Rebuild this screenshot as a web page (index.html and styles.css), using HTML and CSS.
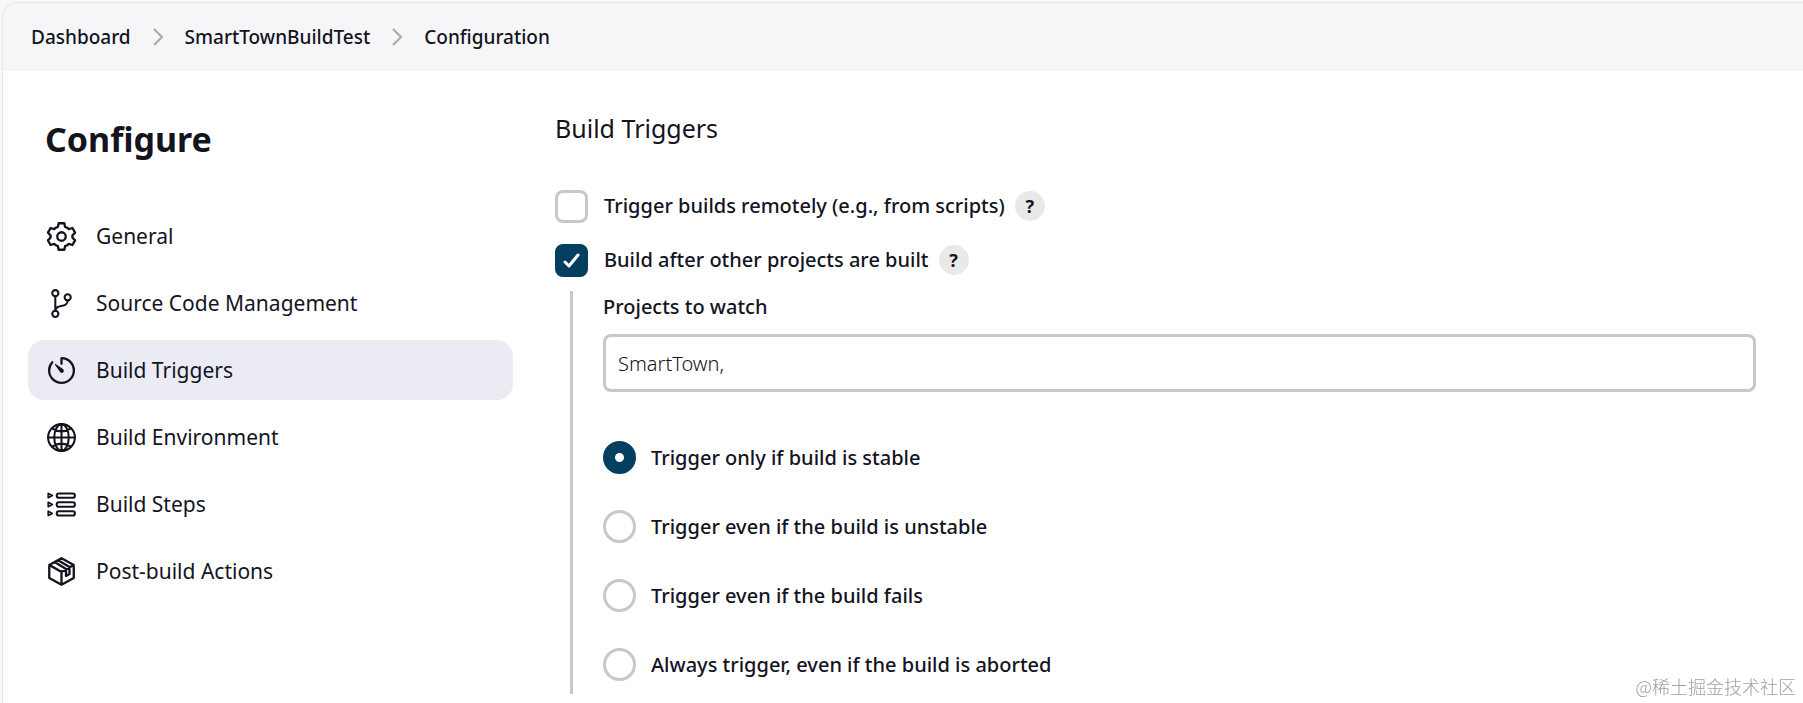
FILE: index.html
```html
<!DOCTYPE html>
<html lang="en">
<head>
  <meta charset="UTF-8">
  <meta name="viewport" content="width=device-width, initial-scale=1.0">
  <title>SmartTownBuildTest Config</title>
  <link rel="stylesheet" href="styles.css">
</head>
<body>
  <div class="page">
    <!-- Breadcrumbs -->
    <nav class="breadcrumbs" aria-label="Breadcrumbs">
      <a href="#">Dashboard</a>
      <svg class="chevron" viewBox="0 0 10 18"><path d="M1 1l8 8-8 8"/></svg>
      <a href="#">SmartTownBuildTest</a>
      <svg class="chevron" viewBox="0 0 10 18"><path d="M1 1l8 8-8 8"/></svg>
      <a href="#">Configuration</a>
    </nav>

    <div class="content">
      <!-- Side Panel -->
      <aside class="side-panel">
        <h1 class="title">Configure</h1>
        <nav class="tasks">
          <a class="task" href="#">
            <svg class="icon icon-bold" viewBox="0 0 512 512"><circle cx="256" cy="256" r="66"/><path d="M212 50h88l12 58q34 10 58 34l56-18 40 72-42 44q6 16 0 32l42 44-40 72-56-18q-24 24-58 34l-12 58h-88l-12-58q-34-10-58-34l-56 18-40-72 42-44q-6-16 0-32l-42-44 40-72 56 18q24-24 58-34z"/></svg>
            General
          </a>
          <a class="task" href="#">
            <svg class="icon" viewBox="0 0 512 512"><circle cx="160" cy="96" r="48"/><circle cx="160" cy="416" r="48"/><circle cx="352" cy="160" r="48"/><path d="M160 368V144M352 208c0 128-192 48-192 160"/></svg>
            Source Code Management
          </a>
          <a class="task task-active" href="#">
            <svg class="icon icon-bold" viewBox="0 0 512 512"><path d="M112.91 128A191.85 191.85 0 0064 254c-1.18 106.35 85.65 193.8 192 194 106.2.2 192-85.83 192-192 0-104.54-83.55-189.61-187.5-192a4.36 4.36 0 00-4.5 4.37V152"/><path class="icon-fill" d="M233.38 278.63l-79-113a8.13 8.13 0 0111.32-11.32l113 79a32.5 32.5 0 01-37.25 53.26 33.21 33.21 0 01-8.07-7.94z"/></svg>
            Build Triggers
          </a>
          <a class="task" href="#">
            <svg class="icon" viewBox="0 0 512 512"><circle cx="256" cy="256" r="208"/><path d="M256 48c-58.07 0-112.67 93.13-112.67 208S197.93 464 256 464s112.67-93.13 112.67-208S314.07 48 256 48zM117.33 117.33c38.24 27.15 86.38 43.34 138.67 43.34s100.43-16.19 138.67-43.34M394.67 394.67c-38.24-27.15-86.38-43.34-138.67-43.34s-100.43 16.19-138.67 43.34M256 48v416M464 256H48"/></svg>
            Build Environment
          </a>
          <a class="task" href="#">
            <svg class="icon" viewBox="0 0 512 512"><path class="icon-thin" d="M50 84l64 34-64 34zM50 222l64 34-64 34zM50 360l64 34-64 34z"/><rect x="182" y="84" width="282" height="68" rx="32"/><rect x="182" y="222" width="282" height="68" rx="32"/><rect x="182" y="360" width="282" height="68" rx="32"/></svg>
            Build Steps
          </a>
          <a class="task" href="#">
            <svg class="icon icon-bold" viewBox="0 0 512 512"><path d="M256 50l190 106v200L256 462 66 356V156zM66 156l190 106 190-106M256 262v200M150 110l176 106v110l54-30V186L204 80"/></svg>
            Post-build Actions
          </a>
        </nav>
      </aside>

      <!-- Build Triggers Section -->
      <main class="config">
        <h2 class="section-title">Build Triggers</h2>

        <div class="option">
          <input class="checkbox" type="checkbox" id="remote">
          <label for="remote">Trigger builds remotely (e.g., from scripts)</label>
          <button class="help" type="button">?</button>
        </div>
        <div class="option">
          <input class="checkbox" type="checkbox" id="upstream" checked>
          <label for="upstream">Build after other projects are built</label>
          <button class="help" type="button">?</button>
        </div>

        <div class="nested">
          <label class="field-label" for="projects">Projects to watch</label>
          <input class="text-input" type="text" id="projects" value="SmartTown,">

          <div class="radios">
            <div class="radio-row">
              <input class="radio" type="radio" name="threshold" id="stable" checked>
              <label for="stable">Trigger only if build is stable</label>
            </div>
            <div class="radio-row">
              <input class="radio" type="radio" name="threshold" id="unstable">
              <label for="unstable">Trigger even if the build is unstable</label>
            </div>
            <div class="radio-row">
              <input class="radio" type="radio" name="threshold" id="fails">
              <label for="fails">Trigger even if the build fails</label>
            </div>
            <div class="radio-row">
              <input class="radio" type="radio" name="threshold" id="aborted">
              <label for="aborted">Always trigger, even if the build is aborted</label>
            </div>
          </div>
        </div>
      </main>
    </div>
  </div>
  <div class="watermark">@稀土掘金技术社区</div>
</body>
</html>
```
FILE: styles.css
```css
/* General Styles */
* {
  box-sizing: border-box;
}

body {
  margin: 0;
  padding: 2px 0 0 2px;
  background: #f8f8f8;
  color: #14141f;
  font-family: "Noto Sans", "Open Sans", sans-serif;
  font-size: 20px;
  font-weight: 500;
  line-height: 28px;
}

a {
  color: inherit;
  text-decoration: none;
}

.page {
  min-height: calc(100vh - 2px);
  border: 1px solid #e6e6e8;
  border-width: 1px 0 0 1px;
  border-radius: 16px 0 0 0;
  background: #fff;
  overflow: hidden;
}

/* Breadcrumbs */
.breadcrumbs {
  display: flex;
  align-items: center;
  gap: 22px;
  height: 68px;
  padding: 0 28px;
  background: #f6f6f9;
  font-size: 19px;
}

.chevron {
  width: 10px;
  height: 18px;
  fill: none;
  stroke: #a8a8ae;
  stroke-width: 2;
}

.content {
  display: flex;
}

/* Side Panel */
.side-panel {
  flex: none;
  width: 510px;
  padding: 43px 0 0 25px;
}

.title {
  margin: 0 0 42px;
  padding-left: 17px;
  font-size: 34px;
  line-height: 50px;
}

.tasks {
  display: flex;
  flex-direction: column;
  gap: 7px;
}

.task {
  display: flex;
  align-items: center;
  gap: 18px;
  height: 60px;
  padding: 0 17px;
  border-radius: 16px;
  font-size: 21px;
  font-weight: 400;
}

.task-active {
  background: #ebebf4;
}

.icon {
  width: 33px;
  height: 33px;
  fill: none;
  stroke: currentColor;
  stroke-width: 32;
  stroke-linecap: round;
  stroke-linejoin: round;
}

.icon-fill {
  fill: currentColor;
  stroke: none;
}

.icon-thin {
  stroke-width: 26;
}

.icon-bold {
  stroke-width: 36;
}

/* Build Triggers Section */
.config {
  flex: 1;
  padding: 40px 47px 4px 42px;
}

.section-title {
  margin: 0 0 44px;
  font-size: 25px;
  font-weight: 400;
  line-height: 34px;
}

.option {
  display: flex;
  align-items: center;
  height: 34px;
  margin-bottom: 20px;
}

.option label {
  margin: 0 10px 0 16px;
}

.checkbox,
.radio {
  appearance: none;
  flex: none;
  width: 33px;
  height: 33px;
  margin: 0;
  border: 3px solid #c5c9ca;
  background: #fff;
}

.checkbox {
  border-radius: 8px;
}

.checkbox:checked {
  border-color: #043f60;
  background: #043f60 url("data:image/svg+xml,%3Csvg xmlns='http://www.w3.org/2000/svg' viewBox='0 0 27 27' fill='none' stroke='white' stroke-width='3' stroke-linecap='round' stroke-linejoin='round'%3E%3Cpath d='M7 15l4 4 9-11'/%3E%3C/svg%3E") center / 27px 27px no-repeat;
}

.radio {
  border-radius: 50%;
}

.radio:checked {
  border: 12px solid #043f60;
}

.help {
  width: 30px;
  height: 30px;
  padding: 0;
  border: none;
  border-radius: 50%;
  background: #e9e9e9;
  color: #14141f;
  font-family: inherit;
  font-size: 18px;
  font-weight: 700;
  line-height: 30px;
}

.nested {
  margin: -6px 0 0 15px;
  padding-left: 30px;
  border-left: 3px solid #c5c9ca;
}

.field-label {
  display: block;
  padding: 2px 0 13px;
}

.text-input {
  display: block;
  width: 100%;
  height: 58px;
  padding: 0 12px;
  border: 3px solid #c5c9ca;
  border-radius: 8px;
  color: #14141f;
  font-family: inherit;
  font-size: 20px;
  font-weight: 300;
}

.radios {
  display: flex;
  flex-direction: column;
  gap: 36px;
  padding: 49px 0 13px;
}

.radio-row {
  display: flex;
  align-items: center;
  gap: 15px;
  height: 33px;
}

.watermark {
  position: fixed;
  right: 7px;
  bottom: 3px;
  color: #a0a0a0;
  font-family: "Noto Sans CJK SC", sans-serif;
  font-size: 18px;
  font-weight: 300;
}
```
